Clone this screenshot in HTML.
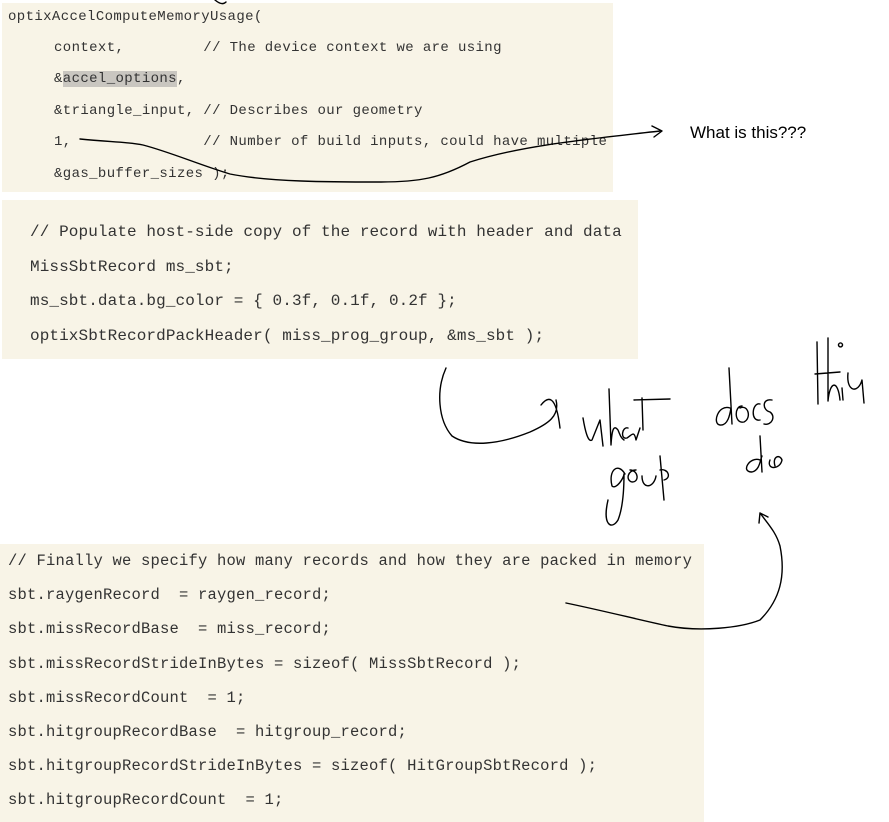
<!DOCTYPE html>
<html><head><meta charset="utf-8"><style>
body{margin:0;width:889px;height:822px;background:#fff;position:relative;overflow:hidden;font-family:"Liberation Mono",monospace;color:#333;}
.b{position:absolute;background:#f8f4e7;}
.l{position:absolute;white-space:pre;line-height:1;}
.b1 .l{font-size:14px;letter-spacing:0.38px;}
.b2 .l{font-size:16px;letter-spacing:0.1px;}
.b3 .l{font-size:15.5px;letter-spacing:0.2px;}
.hl{background:#c9c6c0;}
svg{position:absolute;left:0;top:0;}
</style></head><body>
<div class="b b1" style="left:2px;top:3px;width:611px;height:189px;">
<div class="l" style="left:6px;top:7px">optixAccelComputeMemoryUsage(</div>
<div class="l" style="left:52px;top:38px">context,         // The device context we are using</div>
<div class="l" style="left:52px;top:69px">&amp;<span class="hl">accel_options</span>,</div>
<div class="l" style="left:52px;top:101px">&amp;triangle_input, // Describes our geometry</div>
<div class="l" style="left:52px;top:132px">1,               // Number of build inputs, could have multiple</div>
<div class="l" style="left:52px;top:164px">&amp;gas_buffer_sizes );</div>
</div>
<div class="b b2" style="left:2px;top:200px;width:636px;height:159px;">
<div class="l" style="left:28px;top:24px">// Populate host-side copy of the record with header and data</div>
<div class="l" style="left:28px;top:59px">MissSbtRecord ms_sbt;</div>
<div class="l" style="left:28px;top:93px">ms_sbt.data.bg_color = { 0.3f, 0.1f, 0.2f };</div>
<div class="l" style="left:28px;top:128px">optixSbtRecordPackHeader( miss_prog_group, &amp;ms_sbt );</div>
</div>
<div class="b b3" style="left:0px;top:544px;width:704px;height:278px;">
<div class="l" style="left:8px;top:10px">// Finally we specify how many records and how they are packed in memory</div>
<div class="l" style="left:8px;top:44px">sbt.raygenRecord  = raygen_record;</div>
<div class="l" style="left:8px;top:78px">sbt.missRecordBase  = miss_record;</div>
<div class="l" style="left:8px;top:113px">sbt.missRecordStrideInBytes = sizeof( MissSbtRecord );</div>
<div class="l" style="left:8px;top:147px">sbt.missRecordCount  = 1;</div>
<div class="l" style="left:8px;top:181px">sbt.hitgroupRecordBase  = hitgroup_record;</div>
<div class="l" style="left:8px;top:215px">sbt.hitgroupRecordStrideInBytes = sizeof( HitGroupSbtRecord );</div>
<div class="l" style="left:8px;top:249px">sbt.hitgroupRecordCount  = 1;</div>
</div>
<div style="position:absolute;left:690px;top:123px;font-family:'Liberation Sans',sans-serif;font-size:17px;color:#000">What is this???</div>
<svg width="889" height="822" fill="none" stroke="#000" stroke-width="1.4" stroke-linecap="round" stroke-linejoin="round">
<path d="M80 139 C110 142 130 142 143 145 C170 152 200 165 230 174 C270 182 330 182 380 182 C420 182 440 178 470 162 C520 146 580 140 660 131"/>
<path d="M652 126 L662 131 L654 137"/>
<path d="M215 0 Q222 6 226 2"/>
<path d="M446 368 C436 390 438 420 452 436 C470 448 500 444 530 432 C548 424 560 416 556 400 M541 405 C548 396 556 394 560 428"/>
<path d="M583 418 C585 430 588 443 592 440 C596 430 598 425 600 420 L603 446 M609 389 L611 445 C612 428 614 425 618 430 C620 435 621 438 624 440 M628 428 C622 426 620 440 627 438 C632 435 634 430 636 440 L640 428 M642 398 L643 430 M634 400 L670 399"/>
<path d="M729 368 L732 424 M730 408 C718 404 712 424 720 425 C728 426 730 414 731 408 M742 406 C734 406 734 424 744 422 C752 418 748 404 740 408 M760 404 C752 402 750 422 760 420 M772 400 C762 398 762 410 770 412 C776 416 772 426 764 424"/>
<path d="M817 342 L818 404 M815 374 L840 372 M828 338 L828 401 C830 380 838 380 840 400 M842 388 L843 400 M848 373 C846 392 858 394 862 380 L864 403 M840 343 a2 2 0 1 0 1 0"/>
<path d="M625 474 C618 462 608 470 612 486 C616 490 624 478 624 474 C624 494 622 510 618 520 C612 530 602 526 608 500 M630 470 C638 470 640 482 632 482 C625 480 628 470 636 470 M642 476 C642 490 654 488 656 476 M660 456 L664 500 M660 470 C668 468 672 478 664 480"/>
<path d="M760 436 L762 472 M760 460 C750 456 740 472 752 472 C760 470 760 460 762 456 M770 460 C766 470 780 470 782 460 C780 454 772 456 775 466"/>
<path d="M566 603 C600 610 640 620 668 626 C700 632 740 628 760 620 C780 600 786 576 780 546 C776 532 768 524 760 513 M760 513 L759 523 M760 513 L768 517"/>
</svg>
</body></html>
